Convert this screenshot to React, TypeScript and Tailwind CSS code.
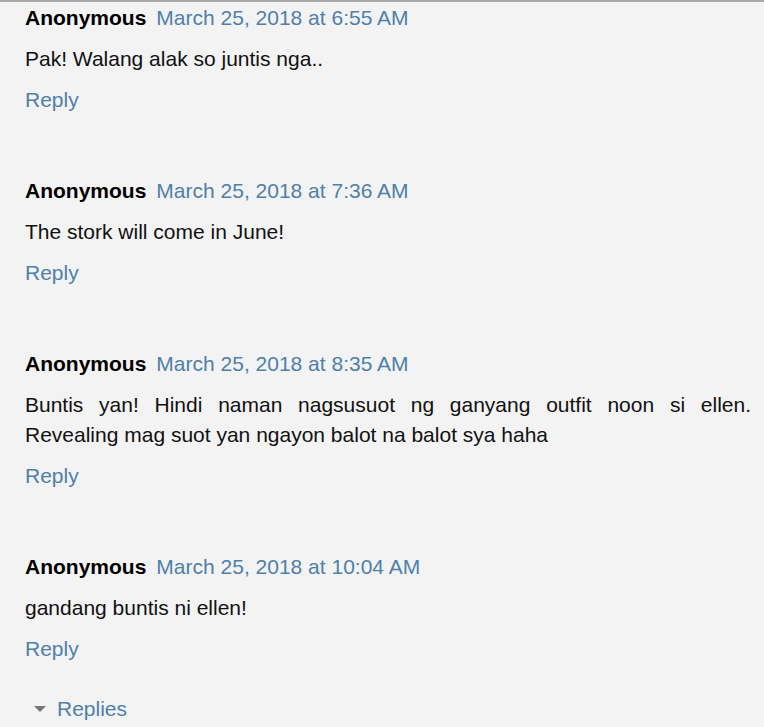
const comments = [
  { date: "March 25, 2018 at 6:55 AM", body: "Pak! Walang alak so juntis nga.." },
  { date: "March 25, 2018 at 7:36 AM", body: "The stork will come in June!" },
  {
    date: "March 25, 2018 at 8:35 AM",
    body: "Buntis yan! Hindi naman nagsusuot ng ganyang outfit noon si ellen. Revealing mag suot yan ngayon balot na balot sya haha",
  },
  { date: "March 25, 2018 at 10:04 AM", body: "gandang buntis ni ellen!" },
];

export default function App() {
  return (
    <div
      className="min-h-screen w-[764px] h-[727px] overflow-hidden bg-[#f3f3f3] border-t-2 border-[#a9a9a9] text-[21px]"
      style={{ fontFamily: '"Liberation Sans", Arial, sans-serif' }}
    >
      <div className="pl-[25px] pr-[13px] pt-[1px]">
        <div className="flex flex-col gap-[61px]">
          {comments.map((c, i) => (
            <div key={i}>
              {/* comment header */}
              <div className="flex items-center h-[30px] leading-[30px]">
                <span className="font-bold text-black">Anonymous</span>
                <span className="ml-[10px] text-[#4f80aa]">{c.date}</span>
              </div>
              <p className="mt-[11px] leading-[30px] text-[#111] text-justify">{c.body}</p>
              <div className="mt-[11px] h-[30px] leading-[30px] text-[#4f80aa]">Reply</div>
            </div>
          ))}
        </div>
        <div className="mt-[30px] flex items-center h-[30px] leading-[30px]">
          <span className="ml-[9px] w-0 h-0 border-l-[6px] border-r-[6px] border-t-[6px] border-l-transparent border-r-transparent border-t-[#777]" />
          <span className="ml-[11px] text-[#4f80aa]">Replies</span>
        </div>
      </div>
    </div>
  );
}
